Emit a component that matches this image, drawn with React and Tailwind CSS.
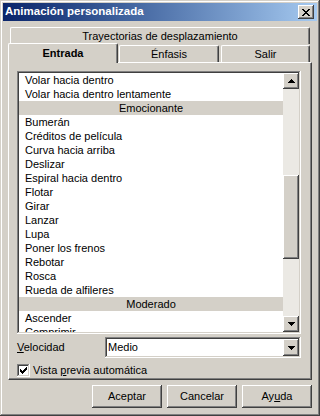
import React from 'react';

const raised =
  'shadow-[inset_-1px_-1px_#404040,inset_1px_1px_#ffffff,inset_-2px_-2px_#808080,inset_2px_2px_#d4d0c8]';
const sunken =
  'shadow-[inset_-1px_-1px_#ffffff,inset_1px_1px_#808080,inset_-2px_-2px_#d4d0c8,inset_2px_2px_#404040]';

const rows = [
  { label: 'Volar hacia dentro' },
  { label: 'Volar hacia dentro lentamente' },
  { label: 'Emocionante', header: true },
  { label: 'Bumerán' },
  { label: 'Créditos de película' },
  { label: 'Curva hacia arriba' },
  { label: 'Deslizar' },
  { label: 'Espiral hacia dentro' },
  { label: 'Flotar' },
  { label: 'Girar' },
  { label: 'Lanzar' },
  { label: 'Lupa' },
  { label: 'Poner los frenos' },
  { label: 'Rebotar' },
  { label: 'Rosca' },
  { label: 'Rueda de alfileres' },
  { label: 'Moderado', header: true },
  { label: 'Ascender' },
  { label: 'Comprimir' },
];

// tiny black triangle used on scroll / combo buttons
const Arrow = ({ down }) => (
  <svg width="7" height="4" viewBox="0 0 7 4" shapeRendering="crispEdges">
    {down ? (
      <path d="M0 0h7v1H0zM1 1h5v1H1zM2 2h3v1H2zM3 3h1v1H3z" fill="#000" />
    ) : (
      <path d="M3 0h1v1H3zM2 1h3v1H2zM1 2h5v1H1zM0 3h7v1H0z" fill="#000" />
    )}
  </svg>
);

const CloseGlyph = () => (
  <svg width="8" height="7" viewBox="0 0 8 7" shapeRendering="crispEdges">
    <path
      d="M0 0h2v1H0zM6 0h2v1H6zM1 1h2v1H1zM5 1h2v1H5zM2 2h4v1H2zM3 3h2v1H3zM2 4h4v1H2zM1 5h2v1H1zM5 5h2v1H5zM0 6h2v1H0zM6 6h2v1H6z"
      fill="#000"
    />
  </svg>
);

const CheckGlyph = () => (
  <svg width="7" height="7" viewBox="0 0 7 7" shapeRendering="crispEdges">
    <path
      d="M6 0h1v1H6zM5 1h2v1H5zM0 2h1v1H0zM4 2h3v1H4zM0 3h2v1H0zM3 3h3v1H3zM0 4h5v1H0zM1 5h3v1H1zM2 6h1v1H2z"
      fill="#000"
    />
  </svg>
);

const SmallButton = ({ children, className = '' }) => (
  <div className={`flex items-center justify-center bg-[#d4d0c8] ${raised} ${className}`}>{children}</div>
);

export default function App() {
  return (
    <div
      className={`w-[320px] h-[416px] bg-[#d4d0c8] p-[3px] flex flex-col text-[11px] text-black shadow-[inset_-1px_-1px_#404040,inset_1px_1px_#d4d0c8,inset_-2px_-2px_#808080,inset_2px_2px_#ffffff]`}
      style={{ fontFamily: '"Liberation Sans", Arial, sans-serif' }}
    >
      {/* Title bar */}
      <div className="h-[18px] flex items-center justify-between pl-[2px] pr-[3px] bg-linear-to-r from-[#0a246a] to-[#a6caf0]">
        <span className="text-white font-bold text-[11.5px] leading-none">Animación personalizada</span>
        <SmallButton className="w-[16px] h-[14px]">
          <CloseGlyph />
        </SmallButton>
      </div>

      <div className="mt-[6px] px-[5px] flex flex-col">
        {/* Tab row 1 */}
        <div className="h-[17px] flex">
          <div className="ml-[2px] w-[300px] h-[17px] flex items-center justify-center pt-[1px] border-t border-l border-white border-r border-r-[#404040] rounded-t-[2px] shadow-[inset_-1px_0_#808080]">
            Trayectorias de desplazamiento
          </div>
        </div>

        {/* Tab row 2 */}
        <div className="h-[18px] flex items-start">
          <div className="relative z-10 -mt-[1px] w-[110px] h-[20px] bg-[#d4d0c8] flex items-center justify-center font-bold border-t border-l border-white border-r border-r-[#404040] rounded-t-[2px] shadow-[inset_-1px_0_#808080]">
            Entrada
          </div>
          <div className="ml-[1px] mt-[1px] w-[100px] h-[17px] flex items-center justify-center border-t border-l border-white border-r border-r-[#404040] rounded-t-[2px] shadow-[inset_-1px_0_#808080]">
            Énfasis
          </div>
          <div className="ml-[2px] mt-[1px] w-[89px] h-[17px] flex items-center justify-center border-t border-l border-white border-r border-r-[#404040] rounded-t-[2px] shadow-[inset_-1px_0_#808080]">
            Salir
          </div>
        </div>

        {/* Panel */}
        <div className="w-[304px] h-[318px] border-t border-l border-white border-r border-b border-r-[#404040] border-b-[#404040] shadow-[inset_-1px_-1px_#808080] pt-[8px] pl-[8px] flex flex-col">
          {/* List box */}
          <div className={`w-[284px] h-[263px] bg-white p-[2px] flex ${sunken}`}>
            <div className="flex-1 overflow-hidden">
              {rows.map((r) =>
                r.header ? (
                  <div key={r.label} className="h-[14px] leading-[14px] bg-[#d4d0c8] text-center">
                    {r.label}
                  </div>
                ) : (
                  <div key={r.label} className="h-[14px] leading-[14px] pl-[6px] whitespace-nowrap">
                    {r.label}
                  </div>
                )
              )}
            </div>
            <div className="w-[16px] flex flex-col bg-[#ebe9e4]">
              <SmallButton className="h-[16px] w-[16px]">
                <Arrow />
              </SmallButton>
              <div className="h-[86px]" />
              <div className={`h-[84px] bg-[#d4d0c8] ${raised}`} />
              <div className="flex-1" />
              <SmallButton className="h-[16px] w-[16px]">
                <Arrow down />
              </SmallButton>
            </div>
          </div>

          {/* Velocidad */}
          <div className="mt-[3px] h-[21px] flex items-center">
            <span className="w-[88px]">
              <span className="underline underline-offset-1">V</span>elocidad
            </span>
            <div className={`w-[196px] h-[21px] bg-white p-[2px] flex items-center ${sunken}`}>
              <span className="flex-1 pl-[1px]">Medio</span>
              <SmallButton className="w-[16px] h-[17px]">
                <Arrow down />
              </SmallButton>
            </div>
          </div>

          {/* Vista previa */}
          <div className="mt-[4px] flex items-center">
            <div className={`w-[13px] h-[13px] bg-white flex items-center justify-center ${sunken}`}>
              <CheckGlyph />
            </div>
            <span className="ml-[3px]">
              Vista <span className="underline underline-offset-1">p</span>revia automática
            </span>
          </div>
        </div>

        {/* Buttons */}
        <div className="mt-[5px] w-[304px] flex justify-end gap-[5px]">
          <SmallButton className="w-[70px] h-[23px]">Aceptar</SmallButton>
          <SmallButton className="w-[70px] h-[23px]">Cancelar</SmallButton>
          <SmallButton className="w-[70px] h-[23px]">
            <span>
              Ay<span className="underline underline-offset-1">u</span>da
            </span>
          </SmallButton>
        </div>
      </div>
    </div>
  );
}
